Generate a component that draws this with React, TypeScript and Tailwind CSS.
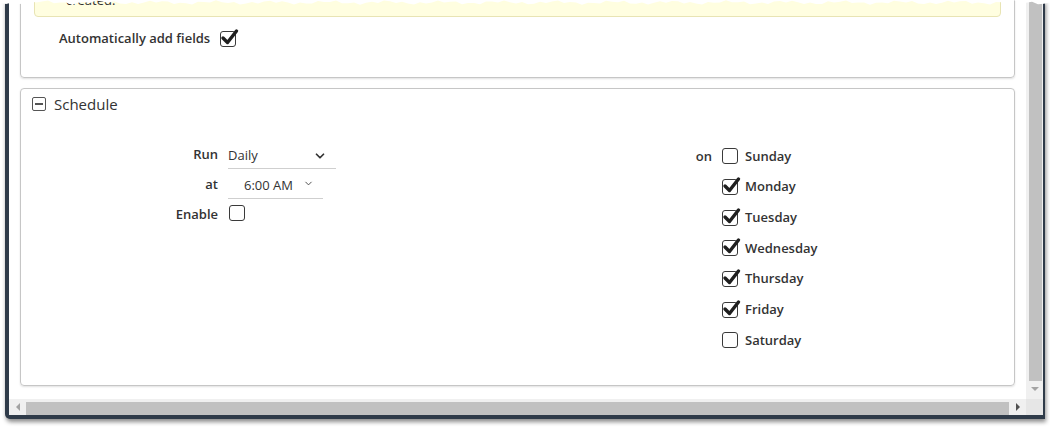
import { ChevronDown } from "lucide-react";

function Check({ checked }: { checked?: boolean }) {
  return (
    <span className="relative inline-block w-[16px] h-[16px] rounded-[3px] border-[1.5px] border-[#3a3a3a] bg-white shrink-0">
      {checked && (
        <svg className="absolute -left-[1px] -top-[4px]" width="19" height="18" viewBox="0 0 19 18">
          <path d="M3 10 L7.5 14.5 L16.5 3" fill="none" stroke="#1f1f1f" strokeWidth="3.4" strokeLinecap="round" strokeLinejoin="round" />
        </svg>
      )}
    </span>
  );
}

const days = [
  { name: "Sunday", on: false },
  { name: "Monday", on: true },
  { name: "Tuesday", on: true },
  { name: "Wednesday", on: true },
  { name: "Thursday", on: true },
  { name: "Friday", on: true },
  { name: "Saturday", on: false },
];

// jagged edge left by the screenshot tool
const tear = (() => {
  const pts: string[] = ["0,0"];
  for (let x = 0; x <= 1050; x += 6) {
    const y = 2.5 + Math.sin(x * 0.37) * 1.2 + Math.sin(x * 0.11) * 1.1;
    pts.push(`${x},${y.toFixed(1)}`);
  }
  pts.push("1050,0");
  return pts.join(" ");
})();

export default function App() {
  return (
    <div className="relative w-[1050px] h-[428px] bg-white overflow-hidden text-[#333] font-['Open_Sans',sans-serif]">
      <div className="ml-[5px] w-[1040px] h-[419px] flex flex-col border-l-4 border-r-2 border-b-4 border-[#2f3b49] rounded-bl-[5px] shadow-[1px_3px_4px_rgba(0,0,0,0.45)] bg-white overflow-hidden">
        <div className="flex flex-1 min-h-0">
          <div className="flex-1 min-w-0 overflow-hidden px-[11px]">
            {/* import options panel, scrolled partly out of view */}
            <div className="-mt-[25px] h-[103px] rounded-[4px] border border-[#c6c6c6] shadow-[0_1px_2px_rgba(0,0,0,0.12)] px-[13px]">
              <div className="mt-[5px] h-[36px] rounded-b-[4px] border border-[#e8e4b4] bg-[#fffee0] pl-[31px] pt-[9px] text-[13px] leading-[18px]">
                created.
              </div>
              <div className="flex items-center gap-[10px] mt-[12px] pl-[25px] h-[20px]">
                <span className="text-[13px] font-semibold">Automatically add fields</span>
                <Check checked />
              </div>
            </div>

            {/* schedule panel */}
            <div className="mt-[10px] h-[298px] rounded-[4px] border border-[#c6c6c6] shadow-[0_1px_2px_rgba(0,0,0,0.12)]">
              <div className="flex items-center gap-[8px] pl-[11px] pt-[4px] h-[26px]">
                <span className="relative w-[14px] h-[14px] rounded-[2px] border-[1.5px] border-[#555] flex items-center justify-center">
                  <span className="w-[8px] h-[1.5px] bg-[#555]" />
                </span>
                <span className="text-[15px] text-[#333]">Schedule</span>
              </div>

              <div className="flex mt-[25px]">
                <div className="w-[497px] flex flex-col">
                  <div className="flex items-center h-[30px]">
                    <span className="w-[197px] text-right text-[13px] font-semibold">Run</span>
                    <div className="ml-[10px] w-[108px] h-[26px] flex items-center justify-between border-b border-[#cfcfcf] pr-[9px] mt-[2px]">
                      <span className="text-[13px]">Daily</span>
                      <ChevronDown size={14} strokeWidth={3} className="text-[#333]" />
                    </div>
                  </div>
                  <div className="flex items-center h-[30px]">
                    <span className="w-[197px] text-right text-[13px] font-semibold">at</span>
                    <div className="ml-[10px] w-[95px] h-[26px] flex items-center border-b border-[#cfcfcf] pl-[16px] mt-[2px]">
                      <span className="text-[13px]">6:00 AM</span>
                      <ChevronDown size={11} strokeWidth={2} className="ml-[10px] -mt-[5px] text-[#444]" />
                    </div>
                  </div>
                  <div className="flex items-center h-[29px]">
                    <span className="w-[197px] text-right text-[13px] font-semibold">Enable</span>
                    <span className="ml-[11px]">
                      <Check />
                    </span>
                  </div>
                </div>

                <div className="flex mt-[1px]">
                  <div className="w-[194px] h-[31px] flex items-center justify-end text-[13px] font-semibold">on</div>
                  <div className="ml-[10px] flex flex-col">
                    {days.map((d) => (
                      <div key={d.name} className="h-[30.67px] flex items-center gap-[7px]">
                        <Check checked={d.on} />
                        <span className="text-[13px] font-semibold">{d.name}</span>
                      </div>
                    ))}
                  </div>
                </div>
              </div>
            </div>
          </div>

          {/* vertical scrollbar */}
          <div className="w-[17px] bg-[#f0f0f0] flex flex-col items-center">
            <div className="ml-[2px] w-[13px] h-[381px] bg-[#c1c1c1]" />
            <div className="mt-[6px] w-0 h-0 border-l-[4px] border-r-[4px] border-t-[4px] border-l-transparent border-r-transparent border-t-[#a3a3a3]" />
          </div>
        </div>

        {/* horizontal scrollbar */}
        <div className="h-[16px] flex bg-[#f0f0f0]">
          <div className="flex-1 flex items-center">
            <div className="w-[17px] flex justify-center">
              <div className="w-0 h-0 border-t-[4px] border-b-[4px] border-r-[4px] border-t-transparent border-b-transparent border-r-[#a3a3a3]" />
            </div>
            <div className="flex-1 h-[13px] mt-[2px] bg-[#c1c1c1]" />
            <div className="w-[17px] flex justify-center">
              <div className="w-0 h-0 border-t-[4px] border-b-[4px] border-l-[4px] border-t-transparent border-b-transparent border-l-[#505050]" />
            </div>
          </div>
          <div className="w-[17px] bg-[#e6e6e6]" />
        </div>
      </div>

      <svg className="absolute left-0 top-0" width="1050" height="7">
        <polygon points={tear} fill="#ffffff" />
      </svg>
    </div>
  );
}
